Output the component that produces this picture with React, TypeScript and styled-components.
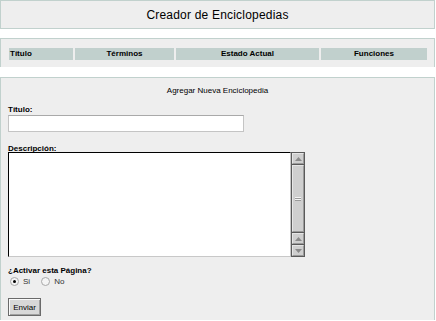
import React from 'react';
import styled, {createGlobalStyle} from 'styled-components';

const GlobalStyle = createGlobalStyle`
  html, body {
    margin: 0;
    padding: 0;
    background: #ffffff;
  }
  body {
    font-family: 'Liberation Sans', Arial, sans-serif;
    font-size: 8px;
    color: #000;
  }
`

const Page = styled.div`
  display: flex;
  flex-direction: column;
  width: 435px;
  gap: 9px;
`

const Panel = styled.section<{open?: boolean}>`
  box-sizing: border-box;
  background: #eeeeee;
  border: 1px solid #c1d1cd;
  ${props => props.open ? 'border-bottom: none;' : ''}
`

const TitleBar = styled(Panel)`
  height: 29px;
  display: flex;
  align-items: center;
  justify-content: center;
  font-size: 12px;
  letter-spacing: 0.2px;
`

const TablePanel = styled(Panel)`
  height: 29px;
  padding: 9px 7px 0 8px;
`

const HeaderRow = styled.div`
  display: grid;
  grid-template-columns: 64px 99px 143px 106px;
  column-gap: 2px;
`

const HeaderCell = styled.div<{align?: string}>`
  height: 12px;
  line-height: 12px;
  background: #c1d0cd;
  font-weight: bold;
  padding: 0 1px;
  text-align: ${props => props.align || 'center'};
`

const FormPanel = styled(Panel)`
  height: 243px;
  margin-top: 1px;
  padding: 8px 7px 0 7px;
  display: flex;
  flex-direction: column;
`

const FormTitle = styled.div`
  text-align: center;
  line-height: 10px;
  height: 10px;
`

const Label = styled.div<{top: number}>`
  font-weight: bold;
  line-height: 10px;
  height: 10px;
  margin-top: ${props => props.top}px;
`

const TextInput = styled.input`
  box-sizing: border-box;
  width: 236px;
  height: 17px;
  margin: 0;
  border: 1px solid #c4c4c4;
  border-top-color: #a9a9a9;
  background: #fff;
  padding: 1px 2px;
  font: inherit;
`

const AreaRow = styled.div`
  display: flex;
  margin-top: -2px;
  height: 105px;
`

const TextArea = styled.textarea`
  box-sizing: border-box;
  width: 283px;
  height: 105px;
  margin: 0;
  resize: none;
  overflow: hidden;
  border: 1px solid #c8c8c8;
  border-top-color: #000;
  border-left-color: #000;
  background: #fff;
  font: inherit;
  padding: 2px;
`

const ScrollBar = styled.div`
  box-sizing: border-box;
  width: 14px;
  height: 105px;
  display: flex;
  flex-direction: column;
  background: #5a5a5a;
  padding: 1px;
  gap: 1px;
`

const ScrollButton = styled.div`
  box-sizing: border-box;
  height: 11px;
  background: #cfcfcf;
  border: 1px solid;
  border-color: #e6e6e6 #9a9a9a #9a9a9a #e6e6e6;
  display: flex;
  align-items: center;
  justify-content: center;
`

const Thumb = styled.div`
  box-sizing: border-box;
  flex: 1;
  background: #cfcfcf;
  border: 1px solid;
  border-color: #e6e6e6 #9a9a9a #9a9a9a #e6e6e6;
  display: flex;
  flex-direction: column;
  align-items: center;
  justify-content: center;
  gap: 1px;
`

const Grip = styled.span`
  display: block;
  width: 6px;
  height: 1px;
  background: #f4f4f4;
  box-shadow: 0 1px 0 #9a9a9a;
`

const RadioRow = styled.div`
  display: flex;
  align-items: center;
  height: 10px;
  margin-top: 0;
`

const RadioLabel = styled.label`
  display: flex;
  align-items: center;
  gap: 4px;
  margin-left: 2px;
  margin-right: 9px;
  color: #333;
`

const Radio = styled.span<{checked?: boolean}>`
  box-sizing: border-box;
  width: 9px;
  height: 9px;
  border-radius: 50%;
  border: 1px solid #a8a8a8;
  background: #f4f4f4;
  display: flex;
  align-items: center;
  justify-content: center;

  &::after {
    content: '';
    width: 3px;
    height: 3px;
    border-radius: 50%;
    background: ${props => props.checked ? '#000' : 'transparent'};
  }
`

const SubmitButton = styled.button`
  box-sizing: border-box;
  width: 33px;
  height: 18px;
  margin-top: 12px;
  padding: 0;
  font: inherit;
  color: #000;
  background: #d8d8d8;
  border: 1px solid #6a6a6a;
  box-shadow: inset 1px 1px 0 #fafafa, inset -1px -1px 0 #a0a0a0;
`

const Arrow = ({down}: {down?: boolean}) => (
    <svg width="7" height="4" viewBox="0 0 7 4">
        <polygon points={down ? '0,0 7,0 3.5,4' : '3.5,0 7,4 0,4'} fill="#8a8a8a"/>
    </svg>
)

export default function App() {
    return (
        <Page>
            <GlobalStyle/>
            <TitleBar>Creador de Enciclopedias</TitleBar>
            <TablePanel open>
                <HeaderRow>
                    <HeaderCell align="left">Título</HeaderCell>
                    <HeaderCell>Términos</HeaderCell>
                    <HeaderCell>Estado Actual</HeaderCell>
                    <HeaderCell>Funciones</HeaderCell>
                </HeaderRow>
            </TablePanel>
            <FormPanel open>
                <FormTitle>Agregar Nueva Enciclopedia</FormTitle>
                <Label top={9}>Título:</Label>
                <TextInput type="text"/>
                <Label top={12}>Descripción:</Label>
                <AreaRow>
                    <TextArea/>
                    <ScrollBar>
                        <ScrollButton><Arrow/></ScrollButton>
                        <Thumb><Grip/><Grip/></Thumb>
                        <ScrollButton><Arrow/></ScrollButton>
                        <ScrollButton><Arrow down/></ScrollButton>
                    </ScrollBar>
                </AreaRow>
                <Label top={9}>¿Activar esta Página?</Label>
                <RadioRow>
                    <RadioLabel><Radio checked/>Si</RadioLabel>
                    <RadioLabel><Radio/>No</RadioLabel>
                </RadioRow>
                <div><SubmitButton>Enviar</SubmitButton></div>
            </FormPanel>
        </Page>
    );
}
